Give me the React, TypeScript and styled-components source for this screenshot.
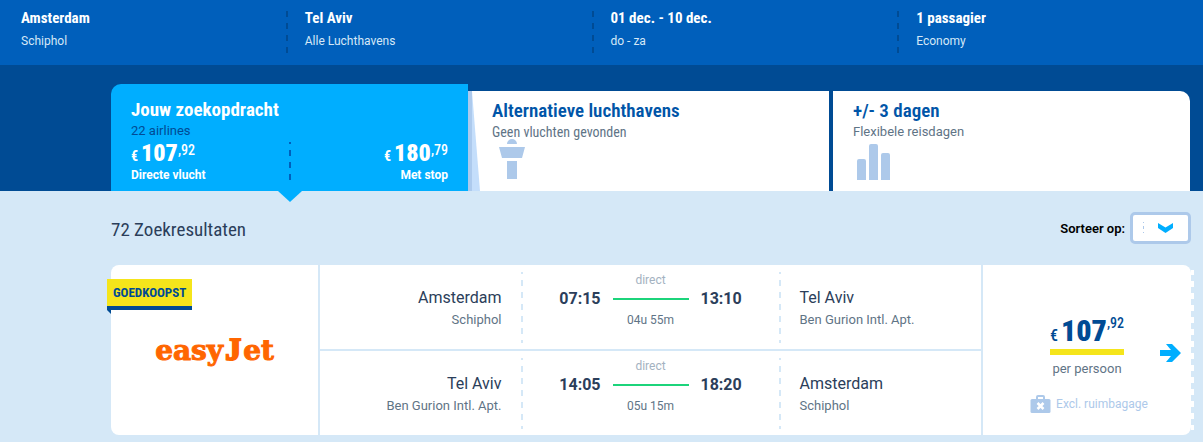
import React from "react";
import styled, { createGlobalStyle, css } from "styled-components";

const color = {
  bar: "#005fbb",
  navy: "#004b94",
  cyan: "#00aeff",
  sky: "#d5e8f7",
  soft: "#adc9ea",
  ink: "#2b3e5a",
  grey: "#5f7486",
  faint: "#a4b2c1",
  green: "#1cd47b",
  yellow: "#f5e51b",
};

const display = `"Roboto Condensed", "Liberation Sans Narrow", "Liberation Sans", sans-serif`;
const text = `Roboto, "Liberation Sans", sans-serif`;

const Global = createGlobalStyle`
  *, *::before, *::after { box-sizing: border-box; }
  body { margin: 0; background: ${color.sky}; font-family: ${text}; color: ${color.ink}; }
  button { font: inherit; color: inherit; border: 0; padding: 0; background: none; text-align: left; cursor: pointer; }
  h2, h3, p { margin: 0; font-weight: 400; }
`;

const dashes = (tone: string, start: number) => css`
  width: 2px;
  background: repeating-linear-gradient(
    to bottom,
    ${tone} 0 6px,
    transparent 6px 12px
  ) 0 ${start}px / 2px 12px repeat-y;
`;

/* Search summary */
const Summary = styled.header`
  display: grid;
  grid-template-columns: calc(25% - 15px) repeat(3, 1fr);
  background: ${color.bar};
  color: #fff;
  height: 65px;
`;

const SummaryItem = styled.button`
  display: flex;
  align-items: flex-start;
  gap: 17px;
  padding-top: 8px;

  &:first-child { padding-left: 21px; }
`;

const SummaryRule = styled.span`
  ${dashes(color.navy, 0)}
  height: 42px;
  margin-top: 3px;
`;

const SummaryTitle = styled.strong`
  display: block;
  font: 700 15px/20px ${display};
`;

const SummaryNote = styled.span`
  display: block;
  margin-top: 4px;
  font-size: 12px;
  line-height: 18px;
  color: #d5e8f7;
`;

/* Tabs */
const TabBand = styled.nav`
  display: grid;
  grid-template-columns: repeat(3, 1fr);
  align-items: end;
  gap: 4px;
  padding: 19px 13px 0 111px;
  background: ${color.navy};
`;

const Tab = styled.button<{ $active?: boolean; $shaded?: boolean }>`
  position: relative;
  display: flex;
  flex-direction: column;
  align-items: stretch;
  justify-content: flex-start;
  height: ${(p) => (p.$active ? 107 : 100)}px;
  padding: ${(p) => (p.$active ? "14px 20px 0" : "8px 20px 0")};
  background: ${(p) => (p.$active ? color.cyan : "#fff")};
  color: ${(p) => (p.$active ? "#fff" : color.bar)};

  &:first-child { border-top-left-radius: 10px; }
  &:last-child { border-top-right-radius: 10px; }

  ${(p) =>
    p.$active &&
    css`
      &::after {
        content: "";
        position: absolute;
        z-index: 1;
        top: 100%;
        left: 50%;
        margin-left: -12px;
        border: 12px solid transparent;
        border-top: 11px solid ${color.cyan};
        border-bottom: 0;
      }
    `}

  ${(p) =>
    p.$shaded &&
    css`
      &::before {
        content: "";
        position: absolute;
        top: 0;
        bottom: 0;
        left: -4px;
        width: 12px;
        background: linear-gradient(to right, #adcaed 4px, #c4defb 4px);
        clip-path: polygon(0 0, 4px 0, 12px 100%, 0 100%);
      }
    `}
`;

const TabTitle = styled.h2<{ $dark?: boolean }>`
  font: ${(p) => (p.$dark ? 600 : 700)} 19px/24px ${display};
  color: ${(p) => (p.$dark ? "#0055a8" : "#fff")};
`;

const TabNote = styled.span<{ $tone?: string; $narrow?: boolean }>`
  font-family: ${(p) => (p.$narrow ? display : text)};
  font-size: ${(p) => (p.$narrow ? 14 : 13)}px;
  line-height: 18px;
  color: ${(p) => p.$tone || color.grey};
`;

const TabIcon = styled.svg`
  display: block;
  overflow: visible;
`;

const Fares = styled.div`
  display: flex;
  justify-content: space-between;
`;

const Fare = styled.div<{ $end?: boolean }>`
  display: flex;
  flex-direction: column;
  flex: 1;
  align-items: ${(p) => (p.$end ? "flex-end" : "flex-start")};
`;

const FareRule = styled.span`
  ${dashes(color.bar, -4)}
  height: 39px;
  margin-top: 2px;
`;

const FareLabel = styled.strong`
  font-size: 12px;
  line-height: 16px;
`;

const Price = styled.span<{ $large?: boolean }>`
  display: flex;
  align-items: baseline;
  font: 900 ${(p) => (p.$large ? "30px/36px" : "24px/27px")} ${display};

  small {
    margin-right: 3px;
    font-size: ${(p) => (p.$large ? 16 : 14)}px;
    line-height: 16px;
    font-weight: ${(p) => (p.$large ? 500 : 700)};
  }
  sup {
    align-self: flex-start;
    font-size: 14px;
    line-height: 20px;
    font-weight: 500;
    vertical-align: baseline;
  }
`;

/* Results */
const Results = styled.main`
  padding: 21px 12px 7px 111px;
`;

const Toolbar = styled.div`
  display: flex;
  align-items: center;
  justify-content: space-between;
  height: 32px;
  margin-bottom: 21px;
`;

const Count = styled.h2`
  font: 400 19px/28px ${display};
  margin-top: 4px;
`;

const Sorting = styled.label`
  display: flex;
  align-items: center;
  gap: 5px;
  font-size: 13px;
  font-weight: 600;
  color: #000;
`;

const SelectBox = styled.span`
  position: relative;
  display: block;
  width: 61px;
  height: 32px;

  svg { position: absolute; inset: 0; pointer-events: none; }
`;

const Select = styled.select`
  appearance: none;
  width: 100%;
  height: 100%;
  border: 3px solid ${color.soft};
  border-radius: 5px;
  background: #fff;
`;

const Card = styled.article`
  position: relative;
  display: grid;
  grid-template-columns: 207fr 665fr 208fr;
  background: #fff;
  border-radius: 8px;

  &::after {
    content: "";
    position: absolute;
    top: 5px;
    bottom: 5px;
    left: 100%;
    ${dashes("#fff", -1)}
    width: 3px;
    background-size: 3px 12px;
  }
`;

const Carrier = styled.div`
  display: flex;
  align-items: center;
  justify-content: center;
`;

const Logo = styled.span`
  font: 700 28px/32px "DejaVu Serif", serif;
  color: #ff6600;
  -webkit-text-stroke: 1px #ff6600;
`;

const LogoCap = styled.span`
  margin: 0 2px;
  font-family: "Liberation Serif", serif;
  font-size: 32px;
  -webkit-text-stroke-width: 2px;
`;

const Ribbon = styled.span`
  position: absolute;
  top: 14px;
  left: -4px;
  padding: 0 6px;
  border-bottom: 4px solid ${color.navy};
  background: ${color.yellow};
  font: 700 13px/27px ${display};
  color: ${color.navy};

  &::after {
    content: "";
    position: absolute;
    top: 31px;
    left: 0;
    border-top: 4px solid ${color.navy};
    border-left: 4px solid transparent;
  }
`;

const Legs = styled.div`
  border: solid ${color.sky};
  border-width: 0 2px;
`;

const Leg = styled.section`
  display: grid;
  grid-template-columns: 1fr 2px 256px 2px 1fr;
  height: 84px;

  & + & { height: 86px; border-top: 2px solid ${color.sky}; }
`;

const LegRule = styled.span`
  ${dashes(color.sky, -4)}
  margin: 7px 0 6px;
`;

const Place = styled.div<{ $end?: boolean }>`
  padding: 22px 19px 0;
  text-align: ${(p) => (p.$end ? "right" : "left")};
`;

const City = styled.h3`
  font-size: 16px;
  line-height: 22px;
`;

const Airport = styled.p`
  font-size: 13px;
  line-height: 22px;
  color: ${color.grey};
`;

const Schedule = styled.div`
  display: grid;
  grid-template-columns: auto 76px auto;
  justify-content: center;
  align-items: center;
  align-content: start;
  column-gap: 12px;
  padding-top: 6px;
  text-align: center;
`;

const Stops = styled.span`
  grid-column: 2;
  font-size: 12px;
  line-height: 18px;
  color: ${color.faint};
`;

const Duration = styled(Stops)`
  line-height: 22px;
  color: ${color.grey};
`;

const Time = styled.time`
  grid-row: 2;
  font-size: 16px;
  font-weight: 700;
  line-height: 20px;
`;

const Track = styled.span`
  grid-row: 2;
  height: 2px;
  background: ${color.green};
`;

const Offer = styled.div`
  position: relative;
  display: flex;
  flex-direction: column;
  align-items: center;
  padding-top: 48px;
  color: ${color.navy};
`;

const OfferPrice = styled.div`
  border-bottom: 6px solid ${color.yellow};
`;

const PerPerson = styled.p`
  margin-top: 4px;
  font-size: 13px;
  line-height: 20px;
  color: ${color.grey};
`;

const Baggage = styled.p`
  display: flex;
  align-items: center;
  gap: 5px;
  margin-top: 15px;
  margin-right: -6px;
  padding-right: 2px;
  font-size: 12px;
  line-height: 20px;
  color: ${color.soft};
`;

const Go = styled.button`
  position: absolute;
  top: 79px;
  right: 10px;

  svg { display: block; }
`;

type PriceProps = { euros: string; cents: string; large?: boolean };

const Amount = ({ euros, cents, large }: PriceProps) => (
  <Price $large={large}>
    <small>€</small>
    {euros}
    <sup>,{cents}</sup>
  </Price>
);

const summary = [
  ["Amsterdam", "Schiphol"],
  ["Tel Aviv", "Alle Luchthavens"],
  ["01 dec. - 10 dec.", "do - za"],
  ["1 passagier", "Economy"],
];

const legs = [
  { from: ["Amsterdam", "Schiphol"], to: ["Tel Aviv", "Ben Gurion Intl. Apt."], leave: "07:15", arrive: "13:10", duration: "04u 55m" },
  { from: ["Tel Aviv", "Ben Gurion Intl. Apt."], to: ["Amsterdam", "Schiphol"], leave: "14:05", arrive: "18:20", duration: "05u 15m" },
];

export default function App() {
  return (
    <>
      <Global />
      <Summary>
        {summary.map(([title, note], i) => (
          <SummaryItem key={title} type="button">
            {i > 0 && <SummaryRule />}
            <span>
              <SummaryTitle>{title}</SummaryTitle>
              <SummaryNote>{note}</SummaryNote>
            </span>
          </SummaryItem>
        ))}
      </Summary>

      <TabBand>
        <Tab type="button" $active>
          <TabTitle>Jouw zoekopdracht</TabTitle>
          <TabNote $tone={color.navy}>22 airlines</TabNote>
          <Fares>
            <Fare>
              <Amount euros="107" cents="92" />
              <FareLabel>Directe vlucht</FareLabel>
            </Fare>
            <FareRule />
            <Fare $end>
              <Amount euros="180" cents="79" />
              <FareLabel>Met stop</FareLabel>
            </Fare>
          </Fares>
        </Tab>
        <Tab type="button" $shaded>
          <TabTitle $dark>Alternatieve luchthavens</TabTitle>
          <TabNote $narrow>Geen vluchten gevonden</TabNote>
          <TabIcon width="40" height="42" viewBox="0 0 40 42" fill={color.soft}>
            <path d="M15 3a5 5 0 0 1 10 0ZM7 6h26l-3 11H10ZM15 20h10v18H15Z" />
          </TabIcon>
        </Tab>
        <Tab type="button">
          <TabTitle $dark>+/- 3 dagen</TabTitle>
          <TabNote>Flexibele reisdagen</TabNote>
          <TabIcon width="40" height="42" viewBox="0 0 40 42" fill={color.soft}>
            <path d="M4 39V20q0-2 2-2h5q2 0 2 2v19ZM16 39V5q0-2 2-2h5q2 0 2 2v34ZM28 39V14q0-2 2-2h5q2 0 2 2v25Z" />
          </TabIcon>
        </Tab>
      </TabBand>

      <Results>
        <Toolbar>
          <Count>72 Zoekresultaten</Count>
          <Sorting>
            Sorteer op:
            <SelectBox>
              <Select defaultValue="">
                <option value="" />
              </Select>
              <svg width="61" height="32" viewBox="0 0 61 32">
                <path d="M13.5 10v13" stroke={color.soft} strokeDasharray="1 3 3 3" />
                <path d="M28 11l7.500 4.500L43 11v5l-7.500 5L28 16Z" fill={color.cyan} />
              </svg>
            </SelectBox>
          </Sorting>
        </Toolbar>

        <Card>
          <Carrier>
            <Logo>
              easy<LogoCap>J</LogoCap>et
            </Logo>
          </Carrier>
          <Legs>
            {legs.map((leg) => (
              <Leg key={leg.leave}>
                <Place $end>
                  <City>{leg.from[0]}</City>
                  <Airport>{leg.from[1]}</Airport>
                </Place>
                <LegRule />
                <Schedule>
                  <Stops>direct</Stops>
                  <Time>{leg.leave}</Time>
                  <Track />
                  <Time>{leg.arrive}</Time>
                  <Duration>{leg.duration}</Duration>
                </Schedule>
                <LegRule />
                <Place>
                  <City>{leg.to[0]}</City>
                  <Airport>{leg.to[1]}</Airport>
                </Place>
              </Leg>
            ))}
          </Legs>
          <Offer>
            <OfferPrice>
              <Amount euros="107" cents="92" large />
            </OfferPrice>
            <PerPerson>per persoon</PerPerson>
            <Baggage>
              <svg width="21" height="18" viewBox="0 0 21 18">
                <path d="M7 4V2q0-1 1-1h5q1 0 1 1v2" fill="none" stroke={color.soft} strokeWidth="2" />
                <rect x="0.500" y="4" width="20" height="14" rx="1.500" fill={color.soft} />
                <path d="M7.500 8l6 6M13.500 8l-6 6" stroke="#fff" strokeWidth="2.500" />
              </svg>
              Excl. ruimbagage
            </Baggage>
            <Go type="button" aria-label="Bekijk vlucht">
              <svg width="21" height="18" viewBox="0 0 21 18" fill={color.cyan}>
                <path d="M0 6h11L6 0h6l9 9-9 9H6l5-6H0Z" />
              </svg>
            </Go>
          </Offer>
          <Ribbon>GOEDKOOPST</Ribbon>
        </Card>
      </Results>
    </>
  );
}
